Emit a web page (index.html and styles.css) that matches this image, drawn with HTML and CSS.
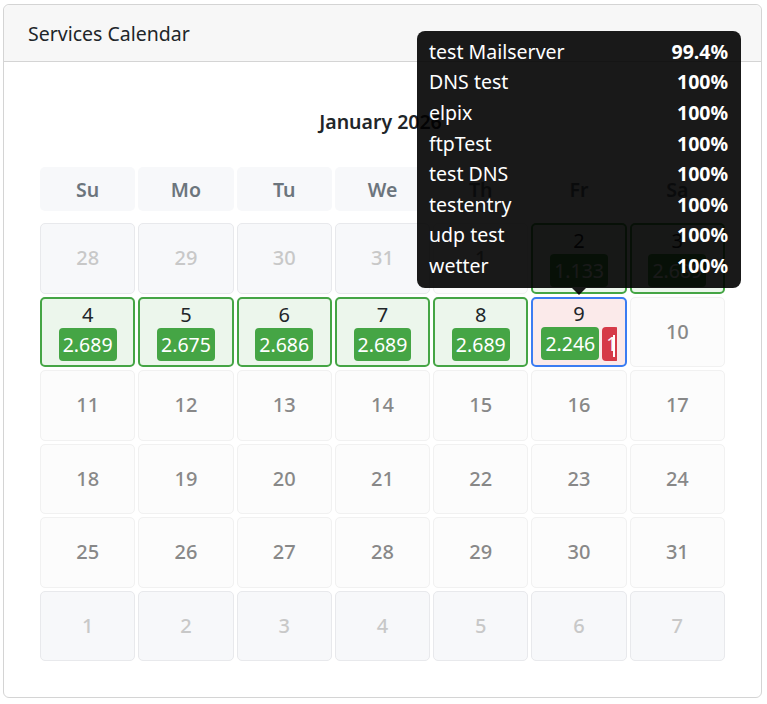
FILE: index.html
```html
<!DOCTYPE html>
<html lang="en">
<head>
<meta charset="utf-8">
<title>Services Calendar</title>
<link rel="stylesheet" href="styles.css">
</head>
<body>
<div class="card">
  <div class="card-header">Services Calendar</div>
  <div class="card-body">
    <div class="month-title">January 2026</div>
    <div class="weekdays">
      <div class="wd">Su</div><div class="wd">Mo</div><div class="wd">Tu</div><div class="wd">We</div><div class="wd">Th</div><div class="wd">Fr</div><div class="wd">Sa</div>
    </div>
    <div class="days">
      <div class="day other"><span class="num">28</span></div>
      <div class="day other"><span class="num">29</span></div>
      <div class="day other"><span class="num">30</span></div>
      <div class="day other"><span class="num">31</span></div>
      <div class="day"><span class="num">1</span></div>
      <div class="day ok"><span class="num">2</span><div class="badges"><span class="badge green">1.133</span></div></div>
      <div class="day ok"><span class="num">3</span><div class="badges"><span class="badge green">2.689</span></div></div>

      <div class="day ok"><span class="num">4</span><div class="badges"><span class="badge green">2.689</span></div></div>
      <div class="day ok"><span class="num">5</span><div class="badges"><span class="badge green">2.675</span></div></div>
      <div class="day ok"><span class="num">6</span><div class="badges"><span class="badge green">2.686</span></div></div>
      <div class="day ok"><span class="num">7</span><div class="badges"><span class="badge green">2.689</span></div></div>
      <div class="day ok"><span class="num">8</span><div class="badges"><span class="badge green">2.689</span></div></div>
      <div class="day selected"><span class="num">9</span><div class="badges"><span class="badge green">2.246</span><span class="badge red">1<i class="caret"></i></span></div>
        <div class="tooltip">
          <div class="tt-row"><span>test Mailserver</span><b>99.4%</b></div>
          <div class="tt-row"><span>DNS test</span><b>100%</b></div>
          <div class="tt-row"><span>elpix</span><b>100%</b></div>
          <div class="tt-row"><span>ftpTest</span><b>100%</b></div>
          <div class="tt-row"><span>test DNS</span><b>100%</b></div>
          <div class="tt-row"><span>testentry</span><b>100%</b></div>
          <div class="tt-row"><span>udp test</span><b>100%</b></div>
          <div class="tt-row"><span>wetter</span><b>100%</b></div>
        </div>
      </div>
      <div class="day"><span class="num">10</span></div>

      <div class="day"><span class="num">11</span></div>
      <div class="day"><span class="num">12</span></div>
      <div class="day"><span class="num">13</span></div>
      <div class="day"><span class="num">14</span></div>
      <div class="day"><span class="num">15</span></div>
      <div class="day"><span class="num">16</span></div>
      <div class="day"><span class="num">17</span></div>

      <div class="day"><span class="num">18</span></div>
      <div class="day"><span class="num">19</span></div>
      <div class="day"><span class="num">20</span></div>
      <div class="day"><span class="num">21</span></div>
      <div class="day"><span class="num">22</span></div>
      <div class="day"><span class="num">23</span></div>
      <div class="day"><span class="num">24</span></div>

      <div class="day"><span class="num">25</span></div>
      <div class="day"><span class="num">26</span></div>
      <div class="day"><span class="num">27</span></div>
      <div class="day"><span class="num">28</span></div>
      <div class="day"><span class="num">29</span></div>
      <div class="day"><span class="num">30</span></div>
      <div class="day"><span class="num">31</span></div>

      <div class="day other"><span class="num">1</span></div>
      <div class="day other"><span class="num">2</span></div>
      <div class="day other"><span class="num">3</span></div>
      <div class="day other"><span class="num">4</span></div>
      <div class="day other"><span class="num">5</span></div>
      <div class="day other"><span class="num">6</span></div>
      <div class="day other"><span class="num">7</span></div>
    </div>
  </div>
</div>
</body>
</html>
```

FILE: styles.css
```css
* { box-sizing: border-box; }

body {
  margin: 0;
  font-family: "Noto Sans", "Open Sans", sans-serif;
  font-size: 20px;
  color: #212529;
  background: #fff;
}

.card {
  margin: 4px 0 0 3px;
  width: 759px;
  border: 1px solid #d4d4d4;
  border-radius: 6px;
  background: #fff;
}

.card-header {
  height: 57px;
  padding: 0 24px;
  display: flex;
  align-items: center;
  background: #f7f7f7;
  border-bottom: 1px solid #d4d4d4;
  border-radius: 6px 6px 0 0;
  font-size: 19.5px;
}

.card-body {
  padding: 45px 36px 36px;
}

.month-title {
  text-align: center;
  font-weight: 600;
  font-size: 19.5px;
  line-height: 30px;
  margin-bottom: 30px;
  padding-right: 4px;
}

.weekdays,
.days {
  display: grid;
  grid-template-columns: repeat(7, minmax(0, 1fr));
  column-gap: 3px;
}

.weekdays {
  margin-bottom: 12px;
}

.wd {
  height: 44px;
  display: flex;
  align-items: center;
  justify-content: center;
  background: #f7f8fa;
  border-radius: 5px;
  color: #6c757d;
  font-weight: 600;
  font-size: 19.5px;
}

.days {
  grid-auto-rows: 70.5px;
  row-gap: 3px;
}

.day {
  position: relative;
  min-width: 0;
  display: flex;
  flex-direction: column;
  align-items: center;
  justify-content: center;
  padding: 0 8px;
  background: #fcfcfc;
  border: 1px solid #f1f1f1;
  border-radius: 5px;
  color: #888;
  font-weight: 500;
}

.num {
  line-height: 24px;
}

.day.other {
  background: #f7f8fa;
  border-color: #e8e9ec;
  color: #c8c8c8;
}

.day.ok {
  background: #ecf6ec;
  border: 2px solid #45a545;
  color: #212529;
  font-weight: 400;
}

.day.selected {
  background: #fbeaea;
  border: 2px solid #3b7cf2;
  color: #212529;
  font-weight: 400;
  z-index: 5;
}

.badges {
  width: 100%;
  overflow: hidden;
  white-space: nowrap;
  text-align: center;
  margin-top: 1px;
}

.badge {
  display: inline-block;
  padding: 4px 4px;
  line-height: 25px;
  font-size: 19.5px;
  border-radius: 4px;
  color: #fff;
  font-weight: 400;
  vertical-align: top;
}

.badge + .badge {
  margin-left: 3px;
}

.badge.green { background: #45a545; }
.badge.red { background: #d63a48; }

.caret {
  display: inline-block;
  width: 1.5px;
  height: 22px;
  margin-left: -4px;
  background: #fff;
  vertical-align: middle;
}

.tooltip {
  position: absolute;
  left: 50%;
  bottom: calc(100% + 11px);
  transform: translateX(-50%);
  width: 324px;
  padding: 6px 13px 6px 12px;
  background: rgba(0, 0, 0, 0.9);
  border-radius: 8px;
  color: #fff;
  font-weight: 400;
  z-index: 10;
}

.tooltip::after {
  content: "";
  position: absolute;
  left: 50%;
  top: 100%;
  margin-left: -7.5px;
  border-style: solid;
  border-width: 7px 7.5px 0 7.5px;
  border-color: rgba(0, 0, 0, 0.9) transparent transparent transparent;
}

.tt-row {
  display: flex;
  justify-content: space-between;
  line-height: 30.6px;
  font-size: 19.5px;
}

.tt-row b {
  font-weight: 700;
}
```
